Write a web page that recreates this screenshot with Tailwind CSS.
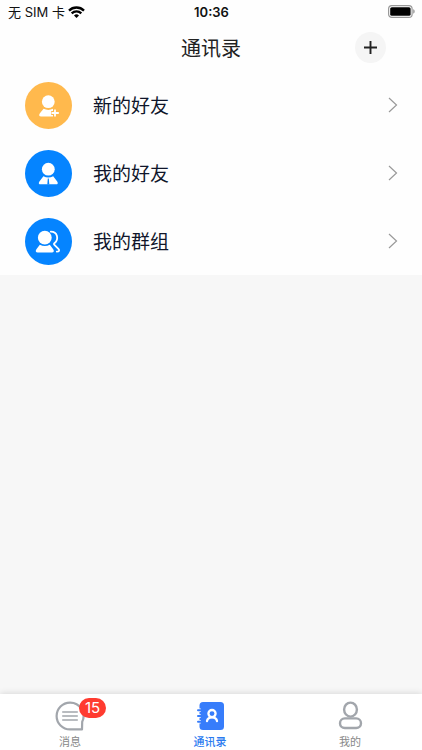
<!DOCTYPE html>
<html lang="zh-CN">
<head>
    <meta charset="UTF-8">
    <meta name="viewport" content="width=device-width, initial-scale=1.0">
    <title>通讯录</title>
    <script src="https://cdn.jsdelivr.net/npm/@tailwindcss/browser@4"></script>
</head>
<body class="flex min-h-screen flex-col bg-[#f7f7f7] font-['Inter','Noto_Sans_CJK_SC',sans-serif] text-[#10162b]">
    <!-- Top -->
    <header class="bg-[#fefefe]">
        <div class="grid h-6 grid-cols-3 items-center pr-[7px] pl-2 text-[13px] leading-6 text-[#111]">
            <div class="flex items-center gap-[3px]">
                <span>无 SIM 卡</span>
                <svg class="h-3 w-[17px]" viewBox="0 0 17 12" fill="none" stroke="#000" stroke-width="2.4">
                    <path d="M1 4.6a10.8 10.8 0 0 1 15 0M3.7 7.3a7 7 0 0 1 9.6 0"/>
                    <path d="M8.5 12 6 9.5a3.6 3.6 0 0 1 5 0z" fill="#000" stroke="none"/>
                </svg>
            </div>
            <span class="text-center text-[13px] font-semibold">10:36</span>
            <svg class="mb-px h-[13px] w-7 justify-self-end" viewBox="0 0 28 13">
                <rect x="1.6" y=".6" width="23.5" height="11.8" rx="3.2" fill="none" stroke="#999" stroke-width="1.2"/>
                <rect x="3.2" y="2.2" width="20.4" height="8.6" rx="1.6" fill="#000"/>
                <path d="M26.2 4.3c2 .6 2 3.8 0 4.4z" fill="#999"/>
            </svg>
        </div>
        <div class="grid h-[47px] grid-cols-[1fr_auto_1fr] items-center pr-9">
            <h1 class="col-start-2 pl-9 font-['Noto_Sans_CJK_SC',sans-serif] text-xl leading-7 text-[#222]">通讯录</h1>
            <button type="button" aria-label="添加" class="flex size-[31px] items-center justify-center justify-self-end rounded-full bg-[#f5f5f5]">
                <svg class="size-[13px]" viewBox="0 0 13 13" stroke="#222" stroke-width="1.9"><path d="M6.5 0v13M0 6.5h13"/></svg>
            </button>
        </div>
    </header>

    <!-- Entries -->
    <main class="flex-1">
        <nav class="bg-[#fefefe] font-['Noto_Sans_CJK_SC',sans-serif] text-[19px] leading-7">
            <a href="#new" class="flex h-[68px] items-center pr-6 pl-[25px]">
                <svg class="size-[47px]" viewBox="0 0 47 47">
                    <circle cx="23.5" cy="23.5" r="23.5" fill="#ffb94d"/>
                    <circle cx="23.3" cy="19.7" r="6.4" fill="#fff"/>
                    <path d="M18.6 26.8q4.7 2.2 9.4 0v7.8H16.2c-2.3 0-2.5-1.6-1.3-3.4z" fill="#fff"/>
                    <path d="M30 27.2v7.6M26.2 31h7.6" stroke="#ffb94d" stroke-width="3.8"/>
                    <path d="M30 27.4v7.2M26.6 31h7.2" stroke="#fff" stroke-width="1.8"/>
                </svg>
                <span class="ml-[21px] flex-1">新的好友</span>
                <svg class="h-4 w-[10px]" viewBox="0 0 10 16" fill="none" stroke="#999" stroke-width="1.2"><path d="m1 1 7.5 7L1 15"/></svg>
            </a>
            <a href="#friends" class="flex h-[68px] items-center pr-6 pl-[25px]">
                <svg class="size-[47px]" viewBox="0 0 47 47">
                    <circle cx="23.5" cy="23.5" r="23.5" fill="#0584ff"/>
                    <circle cx="23.3" cy="19.2" r="6.4" fill="#fff"/>
                    <path d="M18.4 26.2q4.9 2.4 9.8 0l4 5.2c1.1 1.7.8 2.9-1.3 2.9H15.7c-2.1 0-2.4-1.2-1.3-2.9z" fill="#fff"/>
                    <path d="m22.8 28.6-.5 6h2l-.5-6z" fill="#0584ff"/>
                </svg>
                <span class="ml-[21px] flex-1">我的好友</span>
                <svg class="h-4 w-[10px]" viewBox="0 0 10 16" fill="none" stroke="#999" stroke-width="1.2"><path d="m1 1 7.5 7L1 15"/></svg>
            </a>
            <a href="#groups" class="flex h-[68px] items-center pr-6 pl-[25px]">
                <svg class="size-[47px]" viewBox="0 0 47 47">
                    <circle cx="23.5" cy="23.5" r="23.5" fill="#0584ff"/>
                    <circle cx="19.8" cy="19.7" r="6.9" fill="#fff"/>
                    <path d="M14.8 26.8q5 2.6 10 0l3.4 4.4c1.2 1.8.7 3.2-1.3 3.2H12.7c-2 0-2.5-1.4-1.3-3.2z" fill="#fff"/>
                    <path d="M25.8 13.6c6.8.1 8.4 7.7 3.6 11.6q-.9.8 0 1.7l4 3.9c1.4 1.6.9 2.8-1.6 2.8" fill="none" stroke="#fff" stroke-width="1.8" stroke-linecap="round"/>
                </svg>
                <span class="ml-[21px] flex-1">我的群组</span>
                <svg class="h-4 w-[10px]" viewBox="0 0 10 16" fill="none" stroke="#999" stroke-width="1.2"><path d="m1 1 7.5 7L1 15"/></svg>
            </a>
        </nav>
    </main>

    <!-- Tab bar -->
    <footer class="sticky bottom-0 bg-white shadow-[0_-1px_6px_rgba(0,0,0,0.12)]">
        <nav class="grid h-14 grid-cols-3 pr-0.5 font-['Noto_Sans_CJK_SC',sans-serif] text-[11px] leading-4 text-[#888]">
            <a href="#messages" class="flex flex-col items-center gap-0.5 pt-[7px]">
                <span class="relative">
                    <svg class="size-[30px]" viewBox="0 0 30 30" fill="none" stroke="#a2a6ac" stroke-width="2.2">
                        <path d="M15 1.6a13.4 13.4 0 0 0 0 26.8h12l.2-7.6A13.4 13.4 0 0 0 15 1.6z" stroke-linejoin="round"/>
                        <path d="M7.2 11h15.6M7.2 15h15.6M7.2 19h15.6" stroke-width="1.6"/>
                    </svg>
                    <span class="absolute -top-[3px] left-6 h-5 w-[27px] rounded-full bg-[#ff3b30] text-center font-['Inter',sans-serif] text-[15px] leading-5 text-white">15</span>
                </span>
                消息
            </a>
            <a href="#contacts" class="flex flex-col items-center gap-0.5 pt-[7px] font-medium text-[#2a7af0]">
                <svg class="size-[30px]" viewBox="0 0 30 30">
                    <rect x="4.5" y="1" width="24.5" height="28" rx="3.5" fill="#377dfb"/>
                    <path d="M4 9.2h1.8M4 15h1.8M4 20.8h1.8" stroke="#fff" stroke-width="3.6"/>
                    <path d="M3 9.2h3M3 15h3M3 20.8h3" stroke="#377dfb" stroke-width="2" stroke-linecap="round"/>
                    <circle cx="17" cy="12.6" r="3.6" fill="none" stroke="#fff" stroke-width="2.3"/>
                    <path d="M12 20c.5-2.7 2.4-3.7 5-3.7s4.5 1 5 3.7" fill="none" stroke="#fff" stroke-width="2.3" stroke-linecap="round"/>
                </svg>
                通讯录
            </a>
            <a href="#me" class="flex flex-col items-center gap-0.5 pt-[7px]">
                <svg class="size-[30px]" viewBox="0 0 30 30" fill="none" stroke="#a2a6ac" stroke-width="2.4">
                    <ellipse cx="15.5" cy="8.6" rx="6.4" ry="7"/>
                    <rect x="5" y="17.4" width="21" height="9.6" rx="4.8"/>
                </svg>
                我的
            </a>
        </nav>
    </footer>
</body>
</html>
